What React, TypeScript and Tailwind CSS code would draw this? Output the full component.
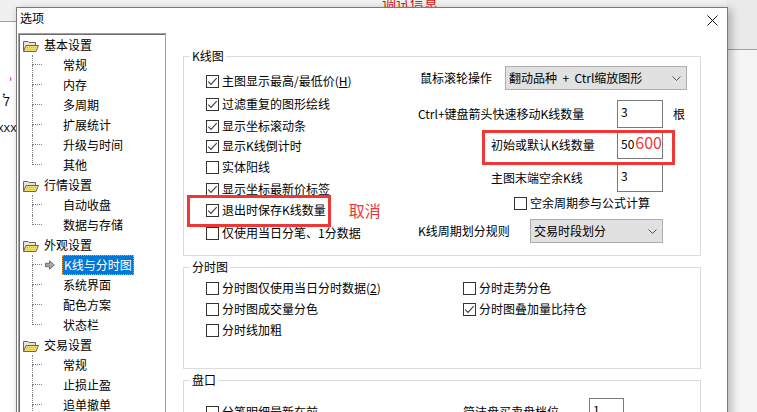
import React from 'react';

type TreeNode = { t: string; root?: boolean; last?: boolean; sel?: boolean };

const tree: TreeNode[] = [
  { t: '基本设置', root: true },
  { t: '常规' },
  { t: '内存' },
  { t: '多周期' },
  { t: '扩展统计' },
  { t: '升级与时间' },
  { t: '其他', last: true },
  { t: '行情设置', root: true },
  { t: '自动收盘' },
  { t: '数据与存储', last: true },
  { t: '外观设置', root: true },
  { t: 'K线与分时图', sel: true },
  { t: '系统界面' },
  { t: '配色方案' },
  { t: '状态栏', last: true },
  { t: '交易设置', root: true },
  { t: '常规' },
  { t: '止损止盈' },
  { t: '追单撤单' },
  { t: '其他', last: true },
];

const Folder = () => (
  <svg width="16" height="13" viewBox="0 0 16 13">
    <path d="M0.5 12 V2.5 H5 L6 3.5 H12.5 V6" fill="#e4e4e4" stroke="#666" />
    <path d="M0.5 12.5 L3 6.5 H15.5 L13 12.5 Z" fill="#f1df6a" stroke="#666" />
    <path d="M4 8.5 H13 M3.5 10.5 H12" stroke="#c9b53c" strokeDasharray="1 1" />
  </svg>
);

const Pointer = () => (
  <svg width="10" height="10" viewBox="0 0 10 10">
    <path d="M0.5 3.3 H4.6 V0.8 L9.4 5 L4.6 9.2 V6.7 H0.5 Z" fill="#a8a8a8" stroke="#555" strokeWidth="0.8" />
  </svg>
);

function Box({ checked }: { checked?: boolean }) {
  return (
    <span className="w-[13px] h-[13px] border border-[#333333] bg-white flex items-center justify-center shrink-0">
      {checked && (
        <svg width="11" height="11" viewBox="0 0 11 11">
          <path d="M1.3 5.6 L4 8.4 L9.7 2.2" fill="none" stroke="#3c3c3c" strokeWidth="1.1" />
        </svg>
      )}
    </span>
  );
}

function Check({ label, checked, className = '' }: { label: React.ReactNode; checked?: boolean; className?: string }) {
  return (
    <div className={`flex items-center h-[20px] ${className}`}>
      <Box checked={checked} />
      <span className="ml-[3px] leading-[20px] whitespace-nowrap">{label}</span>
    </div>
  );
}

function Combo({ text, className = '' }: { text: string; className?: string }) {
  return (
    <div className={`h-[24px] border border-[#adadad] bg-[#e1e1e1] flex items-center justify-between pl-[3px] pr-[5px] ${className}`}>
      <span className="whitespace-pre">{text}</span>
      <svg width="9" height="5" viewBox="0 0 9 5">
        <path d="M0.5 0.5 L4.5 4.5 L8.5 0.5" fill="none" stroke="#555" />
      </svg>
    </div>
  );
}

function Edit({ children, className = '' }: { children: React.ReactNode; className?: string }) {
  return (
    <div className={`h-[28px] border border-[#7a7a7a] bg-white pl-[3px] pt-[2px] leading-[18px] whitespace-nowrap ${className}`}>
      {children}
    </div>
  );
}

export default function App() {
  return (
    <div className="relative w-[757px] h-[412px] overflow-hidden bg-white text-black text-[12px] leading-[20px] font-['Noto_Sans_CJK_SC',sans-serif]">
      {/* window behind the dialog */}
      <div className="absolute inset-0 flex">
        <div className="w-[16px] flex flex-col">
          <div className="h-[22px] bg-[#f0f0f0] border-b border-[#a0a0a0]" />
          <div className="relative flex-1 bg-white">
            <span className="absolute left-[9px] top-[54px] text-[#d020d0] leading-[12px]">'</span>
            <span className="absolute left-[2px] top-[62px] leading-[12px]">,</span>
            <span className="absolute left-[3px] top-[74px] leading-[14px] font-['Liberation_Mono',monospace]">7</span>
            <span className="absolute left-[-3px] top-[101px] text-[11px] leading-[12px] font-['Liberation_Mono',monospace]">XXX</span>
          </div>
        </div>
        <div className="relative flex-1">
          <div className="h-[8px] bg-[#f3f3f3]" />
          <span className="absolute left-[366px] top-[-6px] text-[14px] leading-[16px] text-[#e01010]">调试信息</span>
        </div>
        <div className="w-[30px] flex flex-col">
          <div className="h-[50px] bg-[#eaeaea] border-b border-[#a0a0a0]" />
          <div className="flex-1 bg-[#f5f5f5]" />
        </div>
      </div>

      {/* dialog */}
      <div className="absolute left-[16px] top-[7px] w-[712px] h-[420px] bg-white border border-[#7a7a7a] shadow-[3px_2px_9px_rgba(0,0,0,0.28)] flex flex-col">
        <div className="h-[25px] flex justify-between shrink-0">
          <span className="pl-[3px] leading-[20px]">选项</span>
          <svg className="mt-[7px] mr-[9px]" width="11" height="11" viewBox="0 0 11 11">
            <path d="M0.5 0.5 L10.5 10.5 M10.5 0.5 L0.5 10.5" stroke="#111" strokeWidth="1" />
          </svg>
        </div>

        <div className="flex flex-1">
          {/* tree */}
          <div className="ml-[1px] w-[148px] self-stretch border border-[#a0a0a0]">
            <div className="h-full border-t border-l border-[#6d6d6d] flex flex-col">
              {tree.map((n, i) =>
                n.root ? (
                  <div key={i} className="flex items-center h-[20px] shrink-0">
                    <span className="ml-[3px] flex"><Folder /></span>
                    <span className="ml-[5px] leading-[20px]">{n.t}</span>
                  </div>
                ) : (
                  <div key={i} className="flex h-[20px] shrink-0">
                    <div className="ml-[12px] w-[10px] flex flex-col shrink-0">
                      <div className="h-[10px] border-l border-b border-dotted border-[#7f7f7f]" />
                      {!n.last && <div className="flex-1 border-l border-dotted border-[#7f7f7f]" />}
                    </div>
                    {n.sel ? (
                      <>
                        <div className="ml-[3px] flex items-center"><Pointer /></div>
                        <div className="ml-[7px] h-[20px] bg-[#0078d7] text-white border border-dotted border-[#e8a040] pl-[1px] pr-[1px] leading-[18px]">
                          {n.t}
                        </div>
                      </>
                    ) : (
                      <span className="ml-[21px] leading-[20px]">{n.t}</span>
                    )}
                  </div>
                )
              )}
            </div>
          </div>

          {/* settings */}
          <div className="ml-[17px] flex flex-col">
            <fieldset className="mt-[15px] w-[518px] h-[208px] border border-[#dcdcdc]">
              <legend className="ml-[6px] px-[2px] leading-[16px]">K线图</legend>
              <div className="flex pl-[22px]">
                <div className="w-[212px] flex flex-col">
                  <Check className="mt-[7px]" checked label={<>主图显示最高/最低价(<span className="underline">H</span>)</>} />
                  <Check className="mt-[3px]" checked label="过滤重复的图形绘线" />
                  <Check className="mt-[2px]" checked label="显示坐标滚动条" />
                  <Check checked label="显示K线倒计时" />
                  <Check className="mt-[1px]" label="实体阳线" />
                  <Check className="mt-[2px]" checked label="显示坐标最新价标签" />
                  <div className="flex items-center h-[20px] mt-[1px]">
                    <div className="relative flex items-center">
                      <Box checked />
                      <span className="ml-[3px] leading-[20px] whitespace-nowrap">退出时保存K线数量</span>
                      <div className="absolute left-[-19px] top-[-5px] w-[144px] h-[32px] border-[3px] border-[#ee3838]" />
                    </div>
                    <span className="ml-[23px] text-[16px] leading-[20px] text-[#e8383b] whitespace-nowrap">取消</span>
                  </div>
                  <Check className="mt-[3px]" label="仅使用当日分笔、1分数据" />
                </div>

                <div className="flex flex-col">
                  <div className="flex items-center h-[24px] mt-[2px]">
                    <span className="ml-[2px] w-[85px]">鼠标滚轮操作</span>
                    <Combo className="w-[182px]" text="翻动品种  +  Ctrl缩放图形" />
                  </div>
                  <div className="flex items-center h-[28px] mt-[10px]">
                    <span className="w-[199px] whitespace-nowrap">Ctrl+键盘箭头快速移动K线数量</span>
                    <Edit className="w-[46px]">3</Edit>
                    <span className="ml-[10px]">根</span>
                  </div>
                  <div className="relative flex items-center h-[28px] mt-[3px]">
                    <span className="ml-[73px] w-[126px] whitespace-nowrap">初始或默认K线数量</span>
                    <Edit className="w-[46px]">
                      50<span className="ml-[1px] text-[16px] leading-[16px] text-[#ee3838]">600</span>
                    </Edit>
                    <div className="absolute left-[64px] top-[-1px] w-[193px] h-[35px] border-[3px] border-[#ee3838]" />
                  </div>
                  <div className="flex items-center h-[28px] mt-[5px]">
                    <span className="ml-[73px] w-[126px] whitespace-nowrap">主图末端空余K线</span>
                    <Edit className="w-[46px]">3</Edit>
                  </div>
                  <Check className="ml-[96px] mt-[1px]" label="空余周期参与公式计算" />
                  <div className="flex items-center h-[24px] mt-[6px]">
                    <span className="w-[112px] whitespace-nowrap">K线周期划分规则</span>
                    <Combo className="w-[133px]" text="交易时段划分" />
                  </div>
                </div>
              </div>
            </fieldset>

            <fieldset className="mt-[3px] w-[518px] h-[110px] border border-[#dcdcdc]">
              <legend className="ml-[6px] px-[2px] leading-[16px]">分时图</legend>
              <div className="flex pl-[22px]">
                <div className="w-[257px] flex flex-col">
                  <Check className="mt-[3px]" label={<>分时图仅使用当日分时数据(<span className="underline">2</span>)</>} />
                  <Check className="mt-[1px]" label="分时图成交量分色" />
                  <Check className="mt-[1px]" label="分时线加粗" />
                </div>
                <div className="flex flex-col">
                  <Check className="mt-[3px]" label="分时走势分色" />
                  <Check className="mt-[1px]" checked label="分时图叠加量比持仓" />
                </div>
              </div>
            </fieldset>

            <fieldset className="mt-[3px] w-[518px] h-[110px] border border-[#dcdcdc]">
              <legend className="ml-[6px] px-[2px] leading-[16px]">盘口</legend>
              <div className="flex pl-[22px]">
                <div className="w-[257px] flex flex-col">
                  <Check className="mt-[14px]" label="分笔明细最新在前" />
                </div>
                <div className="flex items-center h-[28px] mt-[10px]">
                  <span className="w-[126px] whitespace-nowrap">简洁盘买卖盘档位</span>
                  <Edit className="w-[35px]">1</Edit>
                </div>
              </div>
            </fieldset>
          </div>
        </div>
      </div>
    </div>
  );
}
